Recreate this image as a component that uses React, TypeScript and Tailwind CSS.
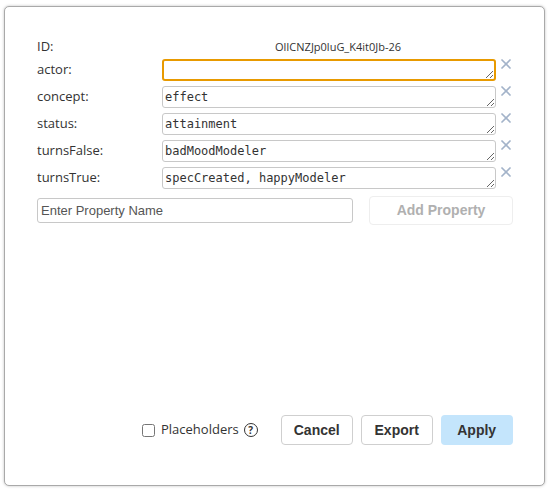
import { X } from "lucide-react";

type Prop = { name: string; value: string; focused?: boolean };

const props: Prop[] = [
  { name: "actor", value: "", focused: true },
  { name: "concept", value: "effect" },
  { name: "status", value: "attainment" },
  { name: "turnsFalse", value: "badMoodModeler" },
  { name: "turnsTrue", value: "specCreated, happyModeler" },
];

const PropRow = ({ prop }: { prop: Prop }) => (
  <div className="flex items-start h-[22px]">
    <div className="w-[125px] h-[22px] flex items-center text-[13px] text-[#333]">
      {prop.name}:
    </div>
    <textarea
      defaultValue={prop.value}
      rows={1}
      spellCheck={false}
      className={
        prop.focused
          ? "w-[334px] h-[22px] rounded-[3px] border-2 border-[#e89a00] bg-white px-[1px] py-0 text-[12px] leading-[18px] outline-none font-['DejaVu_Sans_Mono',monospace] text-[#333]"
          : "w-[334px] h-[22px] rounded-[3px] border border-[#c8c8c8] bg-white px-[2px] py-[1px] text-[12px] leading-[18px] outline-none font-['DejaVu_Sans_Mono',monospace] text-[#333]"
      }
    />
    <button className="ml-[2px] -mt-[3px] w-[16px] h-[16px] flex items-center justify-center text-[#a3b3c9]">
      <X size={18} strokeWidth={2.6} />
    </button>
  </div>
);

export default function App() {
  return (
    <div className="w-[549px] h-[489px] bg-white pt-[6px] pl-[4px] font-['Open_Sans','Noto_Sans',sans-serif]">
      <div className="w-[541px] h-[480px] rounded-[5px] border border-[#a9a9a9] bg-white shadow-[0_0_3px_rgba(0,0,0,0.25)] pt-[32px] pl-[32px] flex flex-col">
        <div className="flex items-center h-[16px] mb-[4px]">
          <div className="w-[125px] text-[13px] text-[#333]">ID:</div>
          <div className="w-[352px] text-center text-[11px] text-[#333]">
            OlICNZJp0luG_K4it0Jb-26
          </div>
        </div>
        <div className="flex flex-col gap-[5px]">
          {props.map((p) => (
            <PropRow key={p.name} prop={p} />
          ))}
        </div>
        <div className="flex items-center mt-[7px]">
          <input
            placeholder="Enter Property Name"
            className="w-[316px] h-[25px] rounded-[3px] border border-[#c8c8c8] px-[3px] text-[13px] outline-none placeholder:text-[#555] font-['Liberation_Sans',Arial,sans-serif]"
          />
          <button
            disabled
            className="ml-[16px] w-[144px] h-[29px] rounded-[4px] border border-[#eeeeee] bg-white text-[14px] font-bold text-[#b0b0b0] font-['Liberation_Sans',Arial,sans-serif]"
          >
            Add Property
          </button>
        </div>
        <div className="flex-1" />
        <div className="flex items-center mb-[40px]">
          <label className="ml-[105px] flex items-center text-[13px] text-[#333]">
            <input
              type="checkbox"
              className="w-[13px] h-[13px] m-0 mr-[6px]"
            />
            Placeholders
          </label>
          <span className="ml-[5px] w-[14px] h-[14px] rounded-full border-[1.5px] border-[#333] flex items-center justify-center text-[10px] font-bold leading-none text-[#333]">
            ?
          </span>
          <button className="ml-[23px] w-[72px] h-[30px] rounded-[4px] border border-[#cfcfcf] bg-white text-[14px] font-bold text-[#333] font-['Liberation_Sans',Arial,sans-serif]">
            Cancel
          </button>
          <button className="ml-[8px] w-[72px] h-[30px] rounded-[4px] border border-[#cfcfcf] bg-white text-[14px] font-bold text-[#333] font-['Liberation_Sans',Arial,sans-serif]">
            Export
          </button>
          <button className="ml-[8px] w-[72px] h-[30px] rounded-[4px] bg-[#c4e5fc] text-[14px] font-bold text-[#333] font-['Liberation_Sans',Arial,sans-serif]">
            Apply
          </button>
        </div>
      </div>
    </div>
  );
}
